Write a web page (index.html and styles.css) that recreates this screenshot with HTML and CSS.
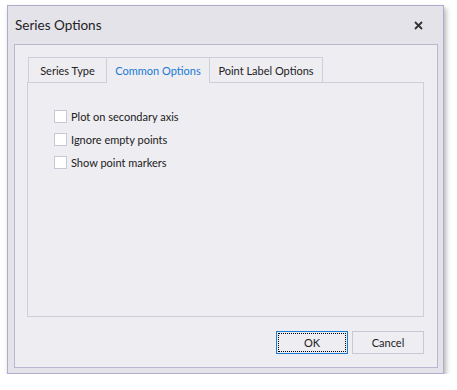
FILE: index.html
```html
<!DOCTYPE html>
<html lang="en">
<head>
    <meta charset="UTF-8">
    <title>Series Options</title>
    <link rel="stylesheet" href="styles.css">
</head>
<body>
    <div class="window">
        <div class="title-bar">
            <span class="title">Series Options</span>
            <svg class="close" width="9" height="9" viewBox="0 0 9 9">
                <path d="M1 1 L8 8 M8 1 L1 8" stroke="#333" stroke-width="1.8" fill="none"/>
            </svg>
        </div>

        <div class="panel">
            <div class="tabs">
                <div class="tab tab-type">Series Type</div>
                <div class="tab tab-common active">Common Options</div>
                <div class="tab tab-label">Point Label Options</div>
            </div>
            <div class="tab-page">
                <label class="check-row"><span class="box"></span>Plot on secondary axis</label>
                <label class="check-row"><span class="box"></span>Ignore empty points</label>
                <label class="check-row"><span class="box"></span>Show point markers</label>
            </div>
            <div class="buttons">
                <div class="btn primary"><span class="focus">OK</span></div>
                <div class="btn">Cancel</div>
            </div>
        </div>
    </div>
</body>
</html>
```

FILE: styles.css
```css
body {
    margin: 0;
    padding: 0;
    background-color: #ffffff;
    font-family: 'Lato', 'Noto Sans', sans-serif;
    color: #202020;
}

.window {
    width: 435px;
    height: 367px;
    margin: 5px 0 0 7px;
    background-color: #e4e3ea;
    border: 1px solid #aeadcb;
    box-shadow: 2px 3px 5px rgba(0, 0, 0, 0.3);
    display: flex;
    flex-direction: column;
}

.title-bar {
    height: 38px;
    flex-shrink: 0;
    display: flex;
    align-items: center;
    justify-content: space-between;
    padding: 0 20px 0 7px;
}

.title {
    font-size: 13.5px;
    color: #222222;
}

.close {
    display: block;
}

.panel {
    margin: 0 5px 5px 6px;
    flex: 1;
    background-color: #eeedf2;
    border: 1px solid #b8b7d0;
    padding: 12px 13px 13px 12px;
    display: flex;
    flex-direction: column;
}

.tabs {
    display: flex;
    padding-left: 1px;
    height: 25px;
}

.tab {
    box-sizing: border-box;
    font-size: 11px;
    border: 1px solid #cfcedb;
    border-bottom: none;
    margin-left: -1px;
    display: flex;
    align-items: center;
    justify-content: center;
    color: #222222;
    position: relative;
}

.tab:first-child {
    margin-left: 0;
}

.tab-type {
    width: 79px;
}

.tab-common {
    width: 104px;
}

.tab-label {
    width: 114px;
}

.tab.active {
    color: #1a7ad4;
    z-index: 1;
    background-color: #eeedf2;
    margin-bottom: -1px;
}

.tab-page {
    flex: 1;
    border: 1px solid #cfcedb;
    padding: 27px 0 0 26px;
    display: flex;
    flex-direction: column;
    gap: 10px;
}

.check-row {
    display: flex;
    align-items: center;
    font-size: 11px;
    height: 13px;
}

.box {
    width: 11px;
    height: 11px;
    background-color: #ffffff;
    border: 1px solid #c9c8d6;
    margin-right: 4px;
}

.buttons {
    display: flex;
    justify-content: flex-end;
    gap: 4px;
    margin-top: 14px;
}

.btn {
    width: 70px;
    height: 21px;
    border: 1px solid #c9c8d6;
    font-size: 11px;
    display: flex;
    align-items: center;
    justify-content: center;
    color: #222222;
}

.btn.primary {
    border-color: #1a7ad4;
    padding: 1px;
    width: 68px;
    height: 19px;
}

.focus {
    flex: 1;
    align-self: stretch;
    border: 1px dotted #000000;
    display: flex;
    align-items: center;
    justify-content: center;
}
```
